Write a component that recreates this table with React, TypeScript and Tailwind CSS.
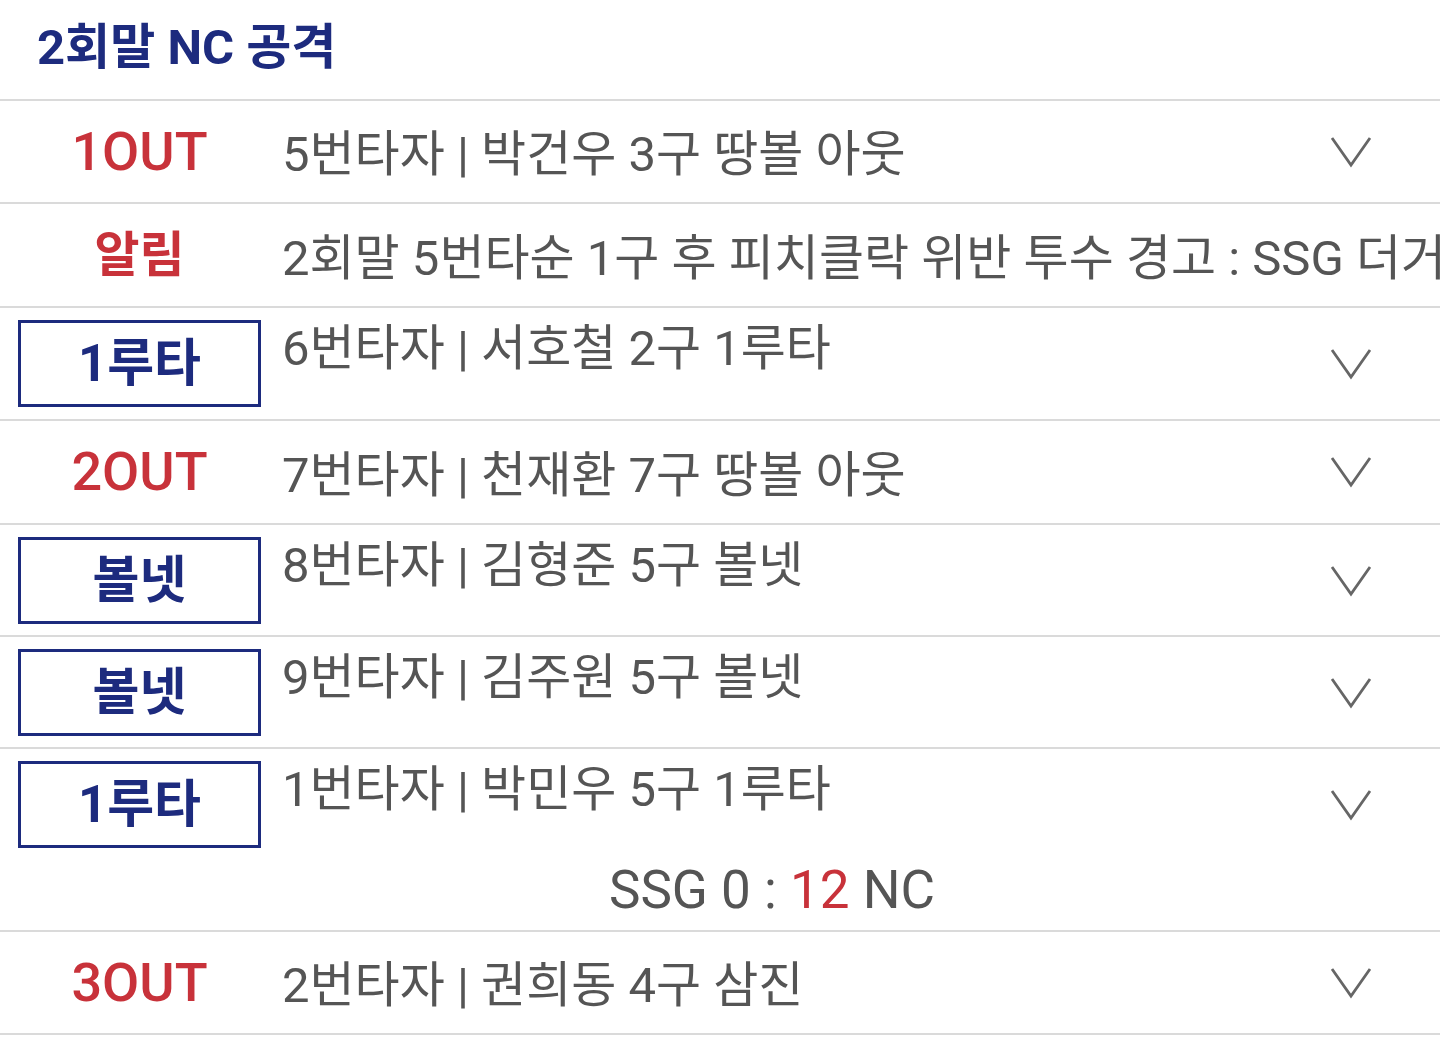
import type { ReactNode } from 'react';

const font = "font-['Roboto','Noto_Sans_CJK_KR',sans-serif]";

function Chevron() {
  return (
    <svg width="42" height="32" viewBox="0 0 42 32" fill="none" className="block">
      <path d="M2 2 L21 29 L40 2" stroke="#666666" strokeWidth="2.8" strokeLinejoin="miter" />
    </svg>
  );
}

function OutLabel({ children }: { children: ReactNode }) {
  return (
    <div className="ml-[18px] flex w-[243px] shrink-0 justify-center text-[54px] font-medium leading-none text-[#c8323a]">
      {children}
    </div>
  );
}

function Badge({ children }: { children: ReactNode }) {
  return (
    <div className="ml-[18px] flex h-[87px] w-[243px] shrink-0 items-center justify-center border-[3px] border-[#1d2b7e] text-[51px] font-bold leading-none text-[#1d2b7e]">
      {children}
    </div>
  );
}

function SimpleRow({ label, text, height }: { label: string; text: string; height: string }) {
  return (
    <div className={`flex items-center border-b-2 border-[#dadada] ${height}`}>
      <OutLabel>{label}</OutLabel>
      <div className="ml-[21px] flex-1 pt-[6px] text-[49px] leading-none text-[#555555]">{text}</div>
      <div className="flex w-[178px] shrink-0 justify-center">
        <Chevron />
      </div>
    </div>
  );
}

function BadgeRow({ badge, text, height, extra }: { badge: string; text: string; height: string; extra?: ReactNode }) {
  return (
    <div className={`flex flex-col border-b-2 border-[#dadada] ${height}`}>
      <div className="flex pt-3">
        <Badge>{badge}</Badge>
        <div className="ml-[21px] flex-1 text-[49px] leading-[1.2] text-[#555555]">{text}</div>
        <div className="flex h-[87px] w-[178px] shrink-0 items-center justify-center">
          <Chevron />
        </div>
      </div>
      {extra}
    </div>
  );
}

export default function App() {
  return (
    <div className={`${font} min-h-screen w-[1440px] overflow-hidden bg-white`}>
      <div className="flex h-[101px] items-center border-b-2 border-[#dadada] pb-[4px] pl-[37px]">
        <h1 className="text-[49px] font-bold leading-none text-[#1d2b7e]">2회말 NC 공격</h1>
      </div>

      <SimpleRow label="1OUT" text="5번타자 | 박건우 3구 땅볼 아웃" height="h-[103px]" />

      <div className="flex h-[104px] items-center border-b-2 border-[#dadada]">
        <div className="ml-[18px] flex w-[243px] shrink-0 justify-center text-[49px] font-bold leading-none text-[#c8323a]">
          알림
        </div>
        <div className="ml-[21px] min-w-0 flex-1 overflow-hidden whitespace-nowrap pt-[6px] text-[49px] leading-none text-[#555555]">
          2회말 5번타순 1구 후 피치클락 위반 투수 경고 : SSG 더거
        </div>
      </div>

      <BadgeRow badge="1루타" text="6번타자 | 서호철 2구 1루타" height="h-[113px]" />

      <SimpleRow label="2OUT" text="7번타자 | 천재환 7구 땅볼 아웃" height="h-[104px]" />

      <BadgeRow badge="볼넷" text="8번타자 | 김형준 5구 볼넷" height="h-[112px]" />

      <BadgeRow badge="볼넷" text="9번타자 | 김주원 5구 볼넷" height="h-[112px]" />

      <BadgeRow
        badge="1루타"
        text="1번타자 | 박민우 5구 1루타"
        height="h-[183px]"
        extra={
          <div className="flex">
            <div className="w-[282px] shrink-0" />
            <div className="flex-1 pt-[16px] text-center text-[53px] leading-none text-[#555555]">
              SSG 0 : <span className="text-[#c8323a]">12</span> NC
            </div>
            <div className="w-[178px] shrink-0" />
          </div>
        }
      />

      <SimpleRow label="3OUT" text="2번타자 | 권희동 4구 삼진" height="h-[103px]" />
    </div>
  );
}
